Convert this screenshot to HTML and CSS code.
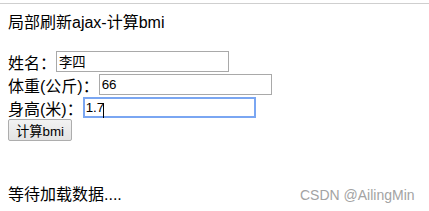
FILE: index.html
```html
<!DOCTYPE html>
<html lang="zh-CN">
<head>
    <meta charset="UTF-8">
    <title>局部刷新ajax-计算bmi</title>
    <link rel="stylesheet" href="styles.css">
</head>
<body>
    <div class="page">
        <div class="title">局部刷新ajax-计算bmi</div>

        <form class="bmi-form" onsubmit="return false">
            <div class="row">
                <label for="name">姓名：</label>
                <input type="text" id="name" value="李四">
            </div>
            <div class="row">
                <label for="weight">体重(公斤)：</label>
                <input type="text" id="weight" value="66">
            </div>
            <div class="row">
                <label for="height">身高(米)：</label>
                <input type="text" id="height" class="focused" value="1.7"><span class="caret"></span>
            </div>
            <button type="button" class="btn">计算bmi</button>
        </form>

        <div class="result">等待加载数据....</div>

        <!-- watermark -->
        <div class="watermark">CSDN @AilingMin</div>
    </div>
</body>
</html>
```

FILE: styles.css
```css
body {
    margin: 0;
    font-family: "Liberation Sans", "Noto Sans CJK SC", sans-serif;
    font-size: 16px;
    color: #000;
    background: #fff;
}
.page {
    position: relative;
    height: 207px;
    margin-top: 3px;
    border-top: 1px solid #cfcfcf;
    padding: 7px 0 0 8px;
    box-sizing: border-box;
}
.title {
    height: 23px;
    line-height: 23px;
}
.bmi-form {
    margin-top: 16px;
}
.row {
    display: flex;
    align-items: center;
    height: 23px;
}
.row label {
    white-space: nowrap;
}
.row input {
    width: 173px;
    height: 21px;
    box-sizing: border-box;
    margin: 0;
    padding: 1px 2px;
    border: 1px solid #a9a9a9;
    font-family: "Liberation Sans", "Noto Sans CJK SC", sans-serif;
    font-size: 13.33px;
    color: #000;
    outline: none;
}
.row input.focused {
    border: 2px solid #7aa6f2;
    padding: 0 1px;
}
.caret {
    position: absolute;
    left: 103px;
    top: 99px;
    width: 1px;
    height: 15px;
    background: #000;
}
.btn {
    display: block;
    width: 64px;
    height: 22px;
    margin: 0;
    padding: 0;
    border: 1px solid #adadad;
    border-radius: 2px;
    background: linear-gradient(#f2f2f2, #e3e3e3);
    font-family: "Liberation Sans", "Noto Sans CJK SC", sans-serif;
    font-size: 13.33px;
    color: #000;
}
.result {
    margin-top: 42px;
    height: 23px;
    line-height: 23px;
}
.watermark {
    position: absolute;
    left: 300px;
    top: 180px;
    line-height: 23px;
    font-size: 14px;
    color: #a3a3a3;
}
```
